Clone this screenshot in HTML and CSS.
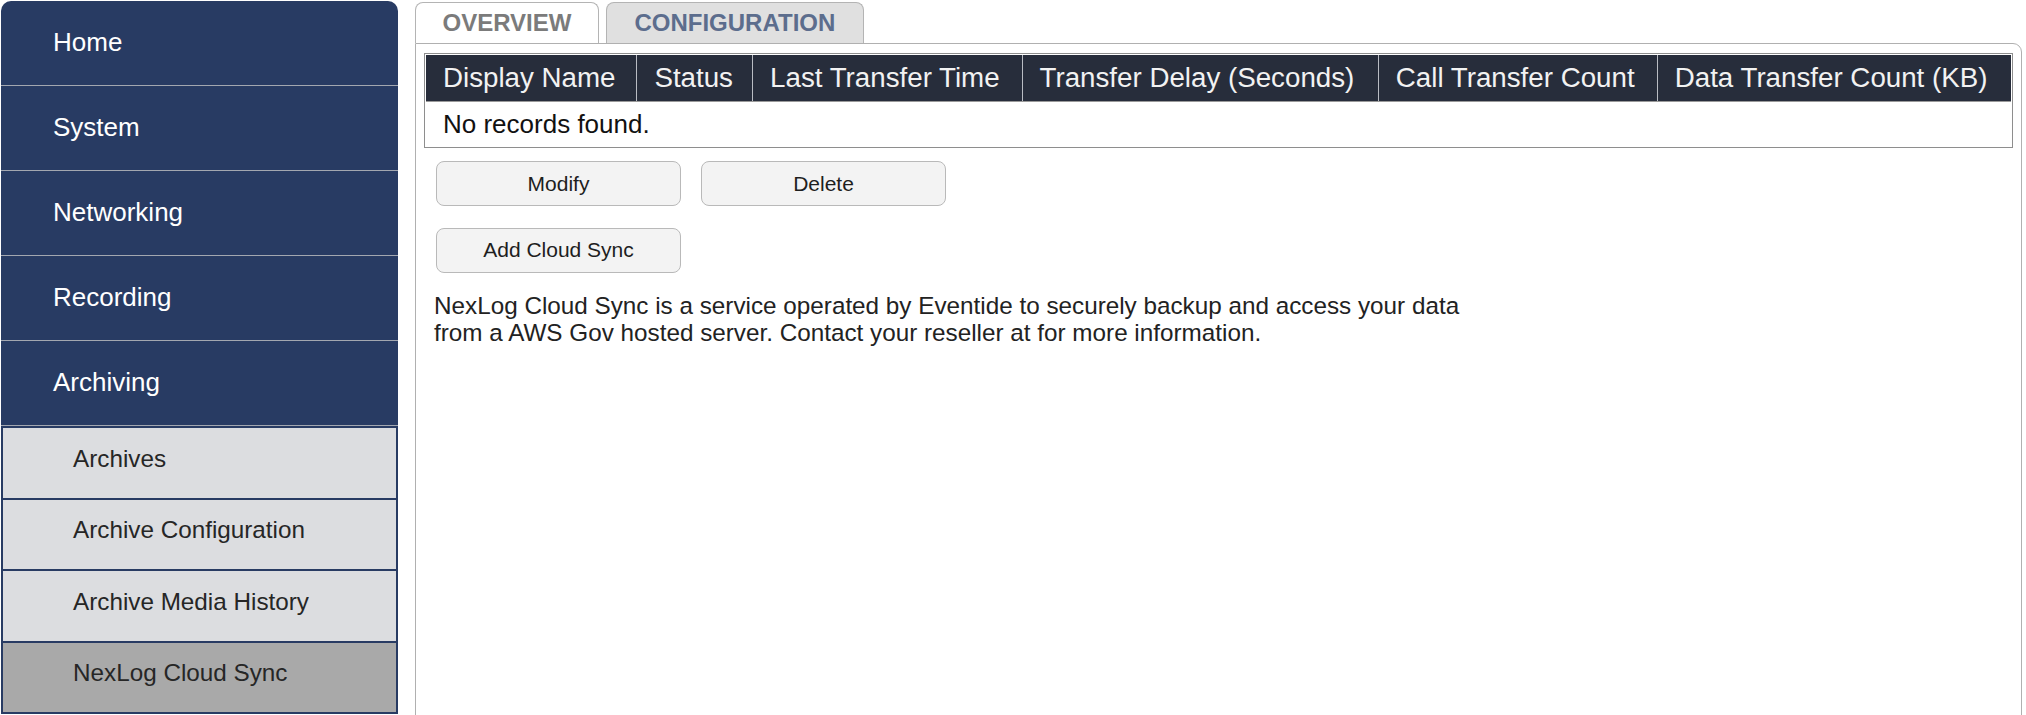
FILE: index.html
```html
<!DOCTYPE html>
<html lang="en">
<head>
<meta charset="utf-8">
<title>NexLog Cloud Sync</title>
<link rel="stylesheet" href="styles.css">
</head>
<body>
<div class="page">
  <nav class="sidebar">
    <a class="nav-item">Home</a>
    <a class="nav-item">System</a>
    <a class="nav-item">Networking</a>
    <a class="nav-item">Recording</a>
    <a class="nav-item">Archiving</a>
    <div class="sub-list">
      <a class="sub-item">Archives</a>
      <a class="sub-item">Archive Configuration</a>
      <a class="sub-item">Archive Media History</a>
      <a class="sub-item sub-item-active">NexLog Cloud Sync</a>
    </div>
  </nav>
  <main class="main">
    <div class="tabs">
      <div class="tab tab-overview">OVERVIEW</div>
      <div class="tab tab-config">CONFIGURATION</div>
    </div>
    <section class="panel">
      <div class="table-wrap">
        <table class="grid">
          <thead>
            <tr>
              <th>Display Name</th>
              <th>Status</th>
              <th>Last Transfer Time</th>
              <th>Transfer Delay (Seconds)</th>
              <th>Call Transfer Count</th>
              <th>Data Transfer Count (KB)</th>
            </tr>
          </thead>
          <tbody>
            <tr>
              <td colspan="6">No records found.</td>
            </tr>
          </tbody>
        </table>
      </div>
      <div class="btn-row">
        <button class="btn">Modify</button>
        <button class="btn">Delete</button>
      </div>
      <div class="btn-row btn-row-second">
        <button class="btn">Add Cloud Sync</button>
      </div>
      <p class="info">NexLog Cloud Sync is a service operated by Eventide to securely backup and access your data from a AWS Gov hosted server. Contact your reseller at for more information.</p>
    </section>
  </main>
</div>
</body>
</html>
```
FILE: styles.css
```css
* {
  box-sizing: border-box;
}

html, body {
  margin: 0;
  padding: 0;
  background: #ffffff;
  overflow: hidden;
}

body {
  font-family: "Liberation Sans", Arial, sans-serif;
  color: #222222;
}

.page {
  display: flex;
  align-items: flex-start;
  padding: 1px 0 0 1px;
}

/* Sidebar */
.sidebar {
  width: 397px;
  flex: 0 0 397px;
  display: flex;
  flex-direction: column;
  background: #283b63;
  border-radius: 10px 10px 0 0;
  overflow: hidden;
}

.nav-item {
  display: block;
  height: 85px;
  padding: 26px 0 0 52px;
  font-size: 26px;
  line-height: 30px;
  color: #ffffff;
  border-bottom: 1px solid #a3a7b0;
}

.sub-list {
  border-top: 2px solid #283b63;
  background: #283b63;
}

.sub-item {
  display: block;
  height: 71.5px;
  padding: 16.5px 0 0 70px;
  font-size: 24.27px;
  line-height: 28px;
  color: #262626;
  background: #dcdde0;
  border-left: 2px solid #283b63;
  border-right: 2px solid #283b63;
  border-bottom: 2px solid #283b63;
}

.sub-item-active {
  background: #a9a9a9;
}

/* Main area */
.main {
  flex: 1;
  margin-left: 17px;
  margin-right: 4px;
  display: flex;
  flex-direction: column;
}

.tabs {
  display: flex;
  gap: 7px;
  padding-top: 1px;
}

.tab {
  height: 41px;
  padding: 0 26.5px;
  font-size: 24px;
  font-weight: bold;
  line-height: 40px;
  border: 1px solid #b4b4b4;
  border-bottom: none;
  border-radius: 8px 8px 0 0;
}

.tab-overview {
  background: #ffffff;
  color: #7b7b7b;
}

.tab-config {
  background: #e0e0e0;
  color: #5c6d8d;
  padding: 0 27.5px;
}

.panel {
  border: 1px solid #b0b0b0;
  border-top-right-radius: 9px;
  padding: 9px 8px;
  min-height: 720px;
}

.table-wrap {
  border: 1px solid #8e8e8e;
  padding: 1px;
}

.grid {
  width: 100%;
  border-collapse: collapse;
}

.grid th {
  height: 46px;
  padding: 0 17px;
  background: #272d3b;
  color: #f2f2f2;
  font-size: 27.73px;
  font-weight: normal;
  text-align: left;
  white-space: nowrap;
  border-left: 1px solid #b9bcc3;
  border-bottom: 1px solid #9a9a9a;
}

.grid th:first-child {
  border-left: none;
}

.grid td {
  height: 45px;
  padding: 1px 17px 0;
  font-size: 26px;
  color: #111111;
  text-align: left;
}

.btn-row {
  display: flex;
  gap: 20px;
  margin: 13px 0 0 12px;
}

.btn-row-second {
  margin-top: 21.5px;
}

.btn {
  width: 245px;
  height: 45px;
  border: 1px solid #b9b9b9;
  border-radius: 8px;
  background: #f3f3f3;
  font-family: "Liberation Sans", Arial, sans-serif;
  font-size: 21px;
  color: #1e1e1e;
  padding: 0;
}

.info {
  margin: 19px 0 0 10px;
  max-width: 1060px;
  font-size: 24.27px;
  line-height: 27.8px;
  color: #222222;
}
```
